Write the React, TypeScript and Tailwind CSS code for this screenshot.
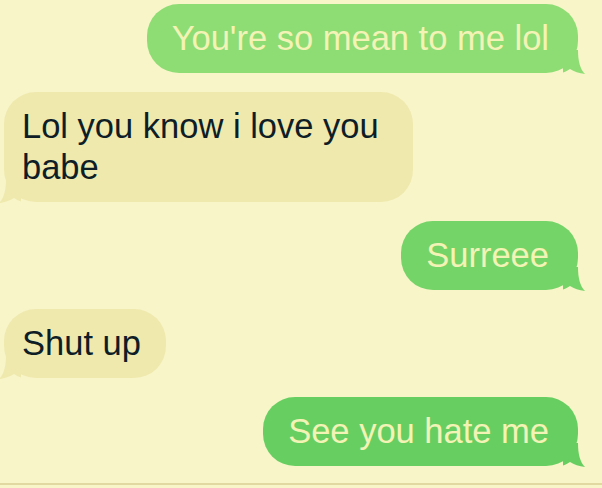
const font = { fontFamily: '"Liberation Sans", Arial, sans-serif' };

type BubbleProps = { text: string; color: string };

function Outgoing({ text, color }: BubbleProps) {
  return (
    <div className="flex justify-end pr-[24px]">
      <div
        className="relative rounded-[32px] py-[14px] pl-[25px] pr-[29px] text-[34.5px] leading-[41px] text-[#f4f3b6]"
        style={{ backgroundColor: color }}
      >
        <span className="relative z-10">{text}</span>
        <svg
          className="absolute right-[-7px] bottom-[-1px]"
          width="22"
          height="24"
          viewBox="0 0 22 24"
        >
          <path
            d="M0 0 H15 C15 11 17 19 22 24 C16 23.5 11 21.5 7 19 C4 21 2 22 0 22.5 Z"
            fill={color}
          />
        </svg>
      </div>
    </div>
  );
}

function Incoming({ text, color }: BubbleProps) {
  return (
    <div className="flex justify-start pl-[4px]">
      <div
        className="relative max-w-[409px] rounded-[32px] py-[14px] pl-[18px] pr-[25px] text-[34.5px] leading-[41px] text-[#0e1d26]"
        style={{ backgroundColor: color }}
      >
        <span className="relative z-10">{text}</span>
        <svg
          className="absolute left-[-5px] bottom-[-1px]"
          width="22"
          height="24"
          viewBox="0 0 22 24"
        >
          <path
            d="M22 0 H7 C7 11 5 19 0 24 C6 23.5 11 21.5 15 19 C18 21 20 22 22 22.5 Z"
            fill={color}
          />
        </svg>
      </div>
    </div>
  );
}

export default function App() {
  return (
    <div className="flex h-[488px] w-[602px] flex-col overflow-hidden bg-[#f8f5c9]" style={font}>
      <div className="flex flex-col gap-[19px] pt-[4px]">
        <Outgoing text="You're so mean to me lol" color="#8ddd74" />
        <Incoming text="Lol you know i love you babe" color="#efe9ae" />
        <Outgoing text="Surreee" color="#74d468" />
        <Incoming text="Shut up" color="#efe9ae" />
        <Outgoing text="See you hate me" color="#67cf62" />
      </div>
      <div className="mt-auto mb-[3px] h-[2px] bg-[#e0d8a0]" />
    </div>
  );
}
